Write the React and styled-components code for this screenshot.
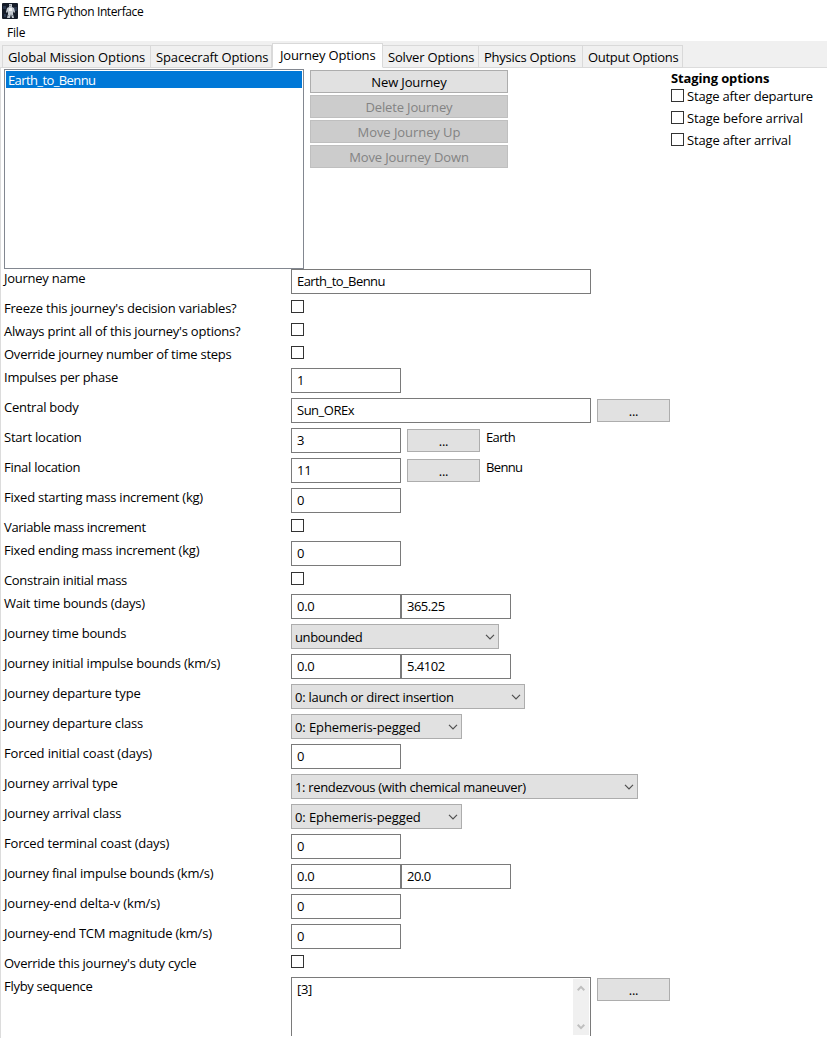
import React from "react";
import styled, { createGlobalStyle } from "styled-components";

const Global = createGlobalStyle`
  * { box-sizing: border-box; }
  body {
    margin: 0;
    background: #fff;
    color: #000;
    font: 13px/18px "Open Sans", "Noto Sans", sans-serif;
    overflow: hidden;
  }
`;

const Window = styled.div`
  width: 827px;
  height: 1038px;
  display: flex;
  flex-direction: column;
  overflow: hidden;
  white-space: nowrap;
`;

const Label = styled.span`
  letter-spacing: ${(p) => p.$ls || 0}px;
  font-weight: ${(p) => (p.$bold ? 700 : 400)};
`;

const TitleBar = styled.header`
  height: 24px;
  padding: 3px 2px 0;
  display: flex;
  gap: 5px;
  font-size: 12px;
`;

const MenuBar = styled.nav`
  height: 17px;
  padding-left: 7px;
  font-size: 12px;
  letter-spacing: -0.2px;
`;

const TabStrip = styled.div`
  height: 27px;
  padding-left: 2px;
  display: flex;
  align-items: flex-end;
  background: #f0f0f0;
  box-shadow: inset 0 -1px #dcdcdc;
`;

const Tab = styled.div`
  width: ${(p) => p.$w}px;
  height: ${(p) => (p.$active ? 25 : 23)}px;
  padding: ${(p) => (p.$active ? "2px 0 0 7px" : "2px 0 0 5px")};
  border: 1px solid #d9d9d9;
  border-left-width: ${(p) => (p.$first || p.$active ? 1 : 0)}px;
  border-bottom-color: ${(p) => (p.$active ? "#fff" : "#d9d9d9")};
  background: ${(p) => (p.$active ? "#fff" : "#f0f0f0")};
`;

const Page = styled.main`
  flex: 1;
  border-left: 1px solid #dcdcdc;
  padding: 1px 0 0 3px;
`;

const Top = styled.section`
  height: 200px;
  display: flex;
`;

const ListBox = styled.div`
  width: 300px;
  height: 200px;
  border: 1px solid #828790;
  padding: 1px;
`;

const ListItem = styled.div`
  height: 17px;
  padding-left: 2px;
  line-height: 18px;
  background: #0078d7;
  color: #fff;
`;

const Actions = styled.div`
  width: 198px;
  margin: 1px 163px 0 6px;
  display: flex;
  flex-direction: column;
  gap: 2px;
`;

const Button = styled.div`
  width: ${(p) => p.$w || 198}px;
  height: 23px;
  padding-top: 2px;
  text-align: center;
  border: 1px solid ${(p) => (p.$disabled ? "#bfbfbf" : "#adadad")};
  background: ${(p) => (p.$disabled ? "#ccc" : "#e1e1e1")};
  color: ${(p) => (p.$disabled ? "#838383" : "#000")};
`;

const BrowseButton = styled(Button)`
  width: 73px;
  padding-top: 2px;
  margin: 1px 0 0 6px;
  letter-spacing: -0.3px;
`;

const Staging = styled.div`
  display: flex;
  flex-direction: column;
`;

const StagingTitle = styled.div`
  height: 19px;
`;

const StageOption = styled.div`
  height: 22px;
  display: flex;
  gap: 3px;
  line-height: 16px;
`;

const CheckBox = styled.div`
  width: 13px;
  height: 13px;
  margin-top: 1px;
  border: 1px solid #333;
  background: #fff;
`;

const Row = styled.div`
  height: ${(p) => (p.$check ? 23 : 30)}px;
  display: grid;
  grid-template-columns: 287px auto;
`;

const RowLabel = styled.div``;

const Fields = styled.div`
  display: flex;
  align-items: flex-start;
`;

const Input = styled.div`
  width: ${(p) => p.$w}px;
  height: 25px;
  padding: 2px 0 0 5px;
  border: 1px solid #7a7a7a;
  background: #fff;
`;

const Select = styled.div`
  width: ${(p) => p.$w}px;
  height: 25px;
  padding: 3px 3px 0;
  display: flex;
  justify-content: space-between;
  border: 1px solid #adadad;
  background: #e1e1e1;
`;

const Chevron = styled.svg`
  width: 10px;
  height: 6px;
  margin-top: 6px;
`;

const Note = styled.div`
  padding-left: 6px;
  letter-spacing: -0.65px;
`;

const TextArea = styled.div`
  width: 300px;
  height: 59px;
  padding: 1px 1px 1px 5px;
  display: flex;
  justify-content: space-between;
  border: 1px solid #7a7a7a;
  border-bottom: 0;
`;

const AreaText = styled.div`
  padding-top: 1px;
  letter-spacing: -0.3px;
`;

const ScrollBar = styled.div`
  width: 16px;
  height: 56px;
  padding: 6px 4px 5px;
  display: flex;
  flex-direction: column;
  justify-content: space-between;
  background: #f0f0f0;
`;

const Arrow = ({ up }) => (
  <svg width="8" height="7" viewBox="0 0 8 7">
    <path d={up ? "M.7 5.2 4 1.9 7.3 5.2" : "M.7 1.8 4 5.1 7.3 1.8"} fill="none" stroke="#bfbfbf" strokeWidth="2" />
  </svg>
);

const AppIcon = () => (
  <svg width="16" height="16" viewBox="0 0 16 16">
    <rect width="16" height="16" rx="1" fill="#151c29" />
    <path d="M1 3h3v3H1zM12 4h3v4h-3zM2 11h2v3H2z" fill="#2b3850" />
    <path d="M7 1h3v3l2 1 1 4-1 1-1-2v3l1 4h-2l-1-4-1 4H5l1-4V8l-1 2-1-1 1-4 2-1z" fill="#c3c9d0" />
    <path d="M7 5h3v3H7z" fill="#eef0f2" />
    <path d="M7 2h2v1H7zM6 12h1v1H6zM10 12h1v1h-1z" fill="#858e9b" />
  </svg>
);

const tabs = [
  ["Global Mission Options", 149, -0.14],
  ["Spacecraft Options", 121, -0.14],
  ["Journey Options", 111, -0.15],
  ["Solver Options", 96, -0.17],
  ["Physics Options", 104, -0.25],
  ["Output Options", 100, -0.3],
];

const actions = [
  ["New Journey", -0.15],
  ["Delete Journey", -0.15],
  ["Move Journey Up", -0.07],
  ["Move Journey Down", -0.12],
];

const stages = [
  ["Stage after departure", -0.19],
  ["Stage before arrival", -0.12],
  ["Stage after arrival", -0.16],
];

const rows = [
  { label: "Journey name", ls: -0.25, inputs: [["Earth_to_Bennu", 300, -0.57]] },
  { label: "Freeze this journey's decision variables?", ls: -0.2, check: true },
  { label: "Always print all of this journey's options?", ls: -0.21, check: true },
  { label: "Override journey number of time steps", ls: -0.24, check: true },
  { label: "Impulses per phase", ls: -0.25, inputs: [["1", 110]] },
  { label: "Central body", ls: -0.25, inputs: [["Sun_OREx", 300, -0.5]], browse: true },
  { label: "Start location", ls: -0.21, inputs: [["3", 110]], browse: true, note: "Earth" },
  { label: "Final location", ls: -0.28, inputs: [["11", 110, -0.3]], browse: true, note: "Bennu" },
  { label: "Fixed starting mass increment (kg)", ls: -0.24, inputs: [["0", 110]] },
  { label: "Variable mass increment", ls: -0.35, check: true },
  { label: "Fixed ending mass increment (kg)", ls: -0.22, inputs: [["0", 110]] },
  { label: "Constrain initial mass", ls: -0.32, check: true },
  { label: "Wait time bounds (days)", ls: -0.22, inputs: [["0.0", 110, -0.3], ["365.25", 110, -0.5]] },
  { label: "Journey time bounds", ls: -0.21, select: ["unbounded", 208, -0.4] },
  { label: "Journey initial impulse bounds (km/s)", ls: -0.22, inputs: [["0.0", 110, -0.3], ["5.4102", 110, -0.5]] },
  { label: "Journey departure type", ls: -0.18, select: ["0: launch or direct insertion", 234, -0.27] },
  { label: "Journey departure class", ls: -0.18, select: ["0: Ephemeris-pegged", 171, -0.1] },
  { label: "Forced initial coast (days)", ls: -0.15, inputs: [["0", 110]] },
  { label: "Journey arrival type", ls: -0.2, select: ["1: rendezvous (with chemical maneuver)", 347, -0.34] },
  { label: "Journey arrival class", ls: -0.15, select: ["0: Ephemeris-pegged", 171, -0.1] },
  { label: "Forced terminal coast (days)", ls: -0.18, inputs: [["0", 110]] },
  { label: "Journey final impulse bounds (km/s)", ls: -0.23, inputs: [["0.0", 110, -0.3], ["20.0", 110, -0.5]] },
  { label: "Journey-end delta-v (km/s)", ls: -0.12, inputs: [["0", 110]] },
  { label: "Journey-end TCM magnitude (km/s)", ls: -0.19, inputs: [["0", 110]] },
  { label: "Override this journey's duty cycle", ls: -0.24, check: true },
  { label: "Flyby sequence", ls: -0.29, area: "[3]", browse: true },
];

const OptionRow = ({ row }) => (
  <Row $check={row.check}>
    <RowLabel><Label $ls={row.ls}>{row.label}</Label></RowLabel>
    <Fields>
      {row.check && <CheckBox />}
      {row.inputs?.map(([text, w, ls], i) => (
        <Input key={i} $w={w}><Label $ls={ls}>{text}</Label></Input>
      ))}
      {row.select && (
        <Select $w={row.select[1]}>
          <Label $ls={row.select[2]}>{row.select[0]}</Label>
          <Chevron viewBox="0 0 10 6"><path d="M1 .8 5 4.8 9 .8" fill="none" stroke="#505050" strokeWidth="1.2" /></Chevron>
        </Select>
      )}
      {row.area && (
        <TextArea>
          <AreaText>{row.area}</AreaText>
          <ScrollBar><Arrow up /><Arrow /></ScrollBar>
        </TextArea>
      )}
      {row.browse && <BrowseButton>...</BrowseButton>}
      {row.note && <Note>{row.note}</Note>}
    </Fields>
  </Row>
);

export default function App() {
  return (
    <Window>
      <Global />
      <TitleBar><AppIcon /><Label $ls={-0.38}>EMTG Python Interface</Label></TitleBar>
      <MenuBar>File</MenuBar>
      <TabStrip>
        {tabs.map(([name, w, ls], i) => (
          <Tab key={name} $w={w} $first={i === 0} $active={i === 2}><Label $ls={ls}>{name}</Label></Tab>
        ))}
      </TabStrip>
      <Page>
        <Top>
          <ListBox><ListItem><Label $ls={-0.6}>Earth_to_Bennu</Label></ListItem></ListBox>
          <Actions>
            {actions.map(([name, ls], i) => (
              <Button key={name} $disabled={i > 0}><Label $ls={ls}>{name}</Label></Button>
            ))}
          </Actions>
          <Staging>
            <StagingTitle><Label $bold $ls={-0.13}>Staging options</Label></StagingTitle>
            {stages.map(([name, ls]) => (
              <StageOption key={name}><CheckBox /><Label $ls={ls}>{name}</Label></StageOption>
            ))}
          </Staging>
        </Top>
        {rows.map((row) => <OptionRow key={row.label} row={row} />)}
      </Page>
    </Window>
  );
}
